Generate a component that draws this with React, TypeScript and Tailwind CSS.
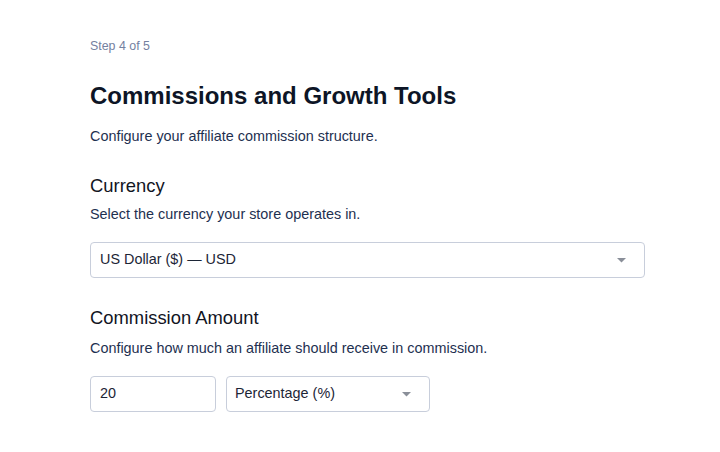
export default function App() {
    return (
        <div className="min-h-screen bg-white font-['Liberation_Sans',Arial,sans-serif]">
            <div className="w-[555px] ml-[90px] pt-[39px]">
                <p className="text-[12.4px] leading-[14px] text-[#74819f]">Step 4 of 5</p>

                <h1 className="mt-[28px] text-[24px] leading-[30px] font-bold text-[#0d1526]">Commissions and Growth Tools</h1>
                <p className="mt-[17px] text-[14.4px] leading-[17px] text-[#1e3050]">Configure your affiliate commission structure.</p>

                {/* Currency */}
                <h2 className="mt-[30px] text-[18.4px] leading-[22px] text-[#12151f]">Currency</h2>
                <p className="mt-[9px] text-[14.4px] leading-[17px] text-[#1e3050]">Select the currency your store operates in.</p>
                <div className="mt-[19px] h-[36px] flex items-center justify-between pl-[9px] pr-[18px] rounded-[4px] border border-[#c8cedb] bg-white">
                    <span className="text-[14.4px] text-[#1c2536]">US Dollar ($) — USD</span>
                    <Caret />
                </div>

                {/* Commission Amount */}
                <h2 className="mt-[29px] text-[18.4px] leading-[22px] text-[#12151f]">Commission Amount</h2>
                <p className="mt-[11px] text-[14.4px] leading-[17px] text-[#1e3050]">Configure how much an affiliate should receive in commission.</p>
                <div className="mt-[19px] flex gap-[10px]">
                    <div className="w-[126px] h-[36px] flex items-center px-[9px] rounded-[4px] border border-[#c8cedb]">
                        <span className="text-[14.4px] text-[#1c2536]">20</span>
                    </div>
                    <div className="w-[204px] h-[36px] flex items-center justify-between pl-[8px] pr-[18px] rounded-[4px] border border-[#c8cedb]">
                        <span className="text-[14.4px] text-[#1c2536]">Percentage (%)</span>
                        <Caret />
                    </div>
                </div>
            </div>
        </div>
    );
}

function Caret() {
    return (
        <svg width="9" height="5" viewBox="0 0 9 5">
            <path d="M0 0 L9 0 L4.5 4.5 Z" fill="#8a8f99" />
        </svg>
    );
}
